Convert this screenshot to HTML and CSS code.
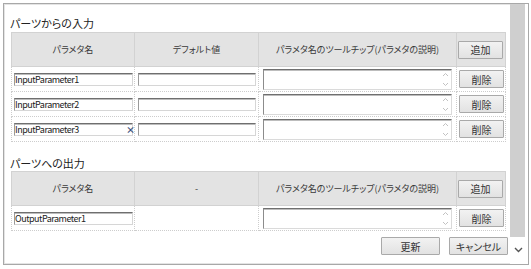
FILE: index.html
```html
<!DOCTYPE html>
<html lang="ja">
<head>
    <meta charset="UTF-8">
    <title>パラメタ設定</title>
    <link rel="stylesheet" href="styles.css">
</head>
<body>
    <div class="frame">
        <div class="panel">
            <h3 class="caption">パーツからの入力</h3>
            <table class="params">
                <colgroup>
                    <col class="w-name"><col class="w-default"><col class="w-tip"><col class="w-op">
                </colgroup>
                <thead>
                    <tr>
                        <th>パラメタ名</th>
                        <th>デフォルト値</th>
                        <th>パラメタ名のツールチップ(パラメタの説明)</th>
                        <th><button class="btn">追加</button></th>
                    </tr>
                </thead>
                <tbody>
                    <tr>
                        <td><input class="field name" type="text" value="InputParameter1"></td>
                        <td><input class="field def" type="text"></td>
                        <td><div class="memo"><textarea class="tip"></textarea><svg class="spin" width="7" height="15" viewBox="0 0 7 15"><path d="M1 4 L3.5 1.5 L6 4 M1 11 L3.5 13.5 L6 11" fill="none" stroke="#c2c2c2" stroke-width="1"/></svg></div></td>
                        <td><button class="btn">削除</button></td>
                    </tr>
                    <tr>
                        <td><input class="field name" type="text" value="InputParameter2"></td>
                        <td><input class="field def" type="text"></td>
                        <td><div class="memo"><textarea class="tip"></textarea><svg class="spin" width="7" height="15" viewBox="0 0 7 15"><path d="M1 4 L3.5 1.5 L6 4 M1 11 L3.5 13.5 L6 11" fill="none" stroke="#c2c2c2" stroke-width="1"/></svg></div></td>
                        <td><button class="btn">削除</button></td>
                    </tr>
                    <tr>
                        <td><div class="edit"><input class="field name" type="text" value="InputParameter3"><span class="clear">×</span></div></td>
                        <td><input class="field def" type="text"></td>
                        <td><div class="memo"><textarea class="tip"></textarea><svg class="spin" width="7" height="15" viewBox="0 0 7 15"><path d="M1 4 L3.5 1.5 L6 4 M1 11 L3.5 13.5 L6 11" fill="none" stroke="#c2c2c2" stroke-width="1"/></svg></div></td>
                        <td><button class="btn">削除</button></td>
                    </tr>
                </tbody>
            </table>

            <h3 class="caption second">パーツへの出力</h3>
            <table class="params">
                <colgroup>
                    <col class="w-name"><col class="w-default"><col class="w-tip"><col class="w-op">
                </colgroup>
                <thead>
                    <tr>
                        <th>パラメタ名</th>
                        <th>-</th>
                        <th>パラメタ名のツールチップ(パラメタの説明)</th>
                        <th><button class="btn">追加</button></th>
                    </tr>
                </thead>
                <tbody>
                    <tr>
                        <td><input class="field name" type="text" value="OutputParameter1"></td>
                        <td></td>
                        <td><div class="memo"><textarea class="tip"></textarea><svg class="spin" width="7" height="15" viewBox="0 0 7 15"><path d="M1 4 L3.5 1.5 L6 4 M1 11 L3.5 13.5 L6 11" fill="none" stroke="#c2c2c2" stroke-width="1"/></svg></div></td>
                        <td><button class="btn">削除</button></td>
                    </tr>
                </tbody>
            </table>

            <div class="actions">
                <button class="btn wide">更新</button>
                <button class="btn wide">キャンセル</button>
            </div>
        </div>
        <div class="vscroll">
            <div class="thumb"></div>
            <div class="down">
                <svg width="9" height="6" viewBox="0 0 9 6"><path d="M1 1 L4.5 4.5 L8 1" fill="none" stroke="#555" stroke-width="1.4"/></svg>
            </div>
        </div>
    </div>
</body>
</html>
```

FILE: styles.css
```css
html, body {
    margin: 0;
    padding: 0;
    background: #fff;
    font-family: "Noto Sans CJK JP", "Noto Sans", sans-serif;
    font-feature-settings: "palt";
    color: #333;
}
.frame {
    margin: 3px 0 0 3px;
    width: 526px;
    height: 262px;
    box-sizing: border-box;
    border: 1px solid #a8a8a8;
    box-shadow: inset 0 0 0 1px #e4e4e4;
    display: flex;
    overflow: hidden;
}
.panel {
    flex: 1;
    padding: 0 0 0 6px;
}
.caption {
    margin: 12px 0 2px;
    font-size: 11px;
    line-height: 14px;
    font-weight: normal;
    color: #222;
}
.caption.second {
    margin: 14px 0 1px;
}
.params {
    width: 494px;
    margin-left: 1px;
    border-collapse: collapse;
    table-layout: fixed;
    font-size: 9px;
}
.w-name { width: 123px; }
.w-default { width: 124px; }
.w-tip { width: 198px; }
.w-op { width: 49px; }
.params th {
    height: 33px;
    padding: 0;
    background: #e3e3e3;
    border: 1px solid #d2d2d2;
    font-weight: normal;
    color: #3a3a3a;
    text-align: center;
}
.params td {
    height: 24px;
    padding: 0 0 0 2px;
    border: 1px dotted #cdcdcd;
    vertical-align: middle;
}
.params th:last-child {
    text-align: left;
    padding-left: 1px;
}
.field {
    display: block;
    box-sizing: border-box;
    height: 13px;
    padding: 0;
    border: 1px solid #d6d6d6;
    border-top-color: #6f6f6f;
    border-left-color: #9a9a9a;
    box-shadow: inset 0 1px 0 #bcbcbc;
    font-family: "Noto Sans CJK JP", sans-serif;
    font-size: 9px;
    letter-spacing: -0.5px;
    line-height: 11px;
    color: #222;
    background: #fff;
    outline: none;
}
.field.name { width: 119px; }
.field.def { width: 118px; margin-left: 1px; }
.edit, .memo {
    position: relative;
}
.clear {
    position: absolute;
    left: 112px;
    top: 0;
    font-size: 9px;
    line-height: 13px;
    color: #3a4f7a;
    font-weight: bold;
}
.tip {
    display: block;
    box-sizing: border-box;
    width: 189px;
    height: 21px;
    margin: 0 0 0 2px;
    padding: 0;
    resize: none;
    overflow: hidden;
    border: 1px solid #dadada;
    border-top-color: #6f6f6f;
    border-left-color: #8c8c8c;
    box-shadow: inset 0 1px 0 #bdbdbd;
    background: #fff;
    outline: none;
}
.spin {
    position: absolute;
    left: 181px;
    top: 3px;
}
.btn {
    display: block;
    box-sizing: border-box;
    width: 45px;
    height: 18px;
    padding: 0;
    border: 1px solid #a9a9a9;
    border-radius: 1px;
    background: linear-gradient(#f2f2f2, #e2e2e2);
    font-family: "Noto Sans CJK JP", sans-serif;
    font-feature-settings: "palt";
    font-size: 10px;
    color: #333;
}
.actions {
    display: flex;
    justify-content: flex-end;
    gap: 9px;
    margin: 6px 2px 0 0;
}
.btn.wide {
    width: 59px;
}
.vscroll {
    width: 16px;
    display: flex;
    flex-direction: column;
    padding: 0 2px 1px 0;
    background: #fff;
}
.thumb {
    flex: 1;
    background: #cfcfcf;
    margin-right: 1px;
}
.down {
    height: 26px;
    display: flex;
    align-items: center;
    justify-content: center;
}
```
